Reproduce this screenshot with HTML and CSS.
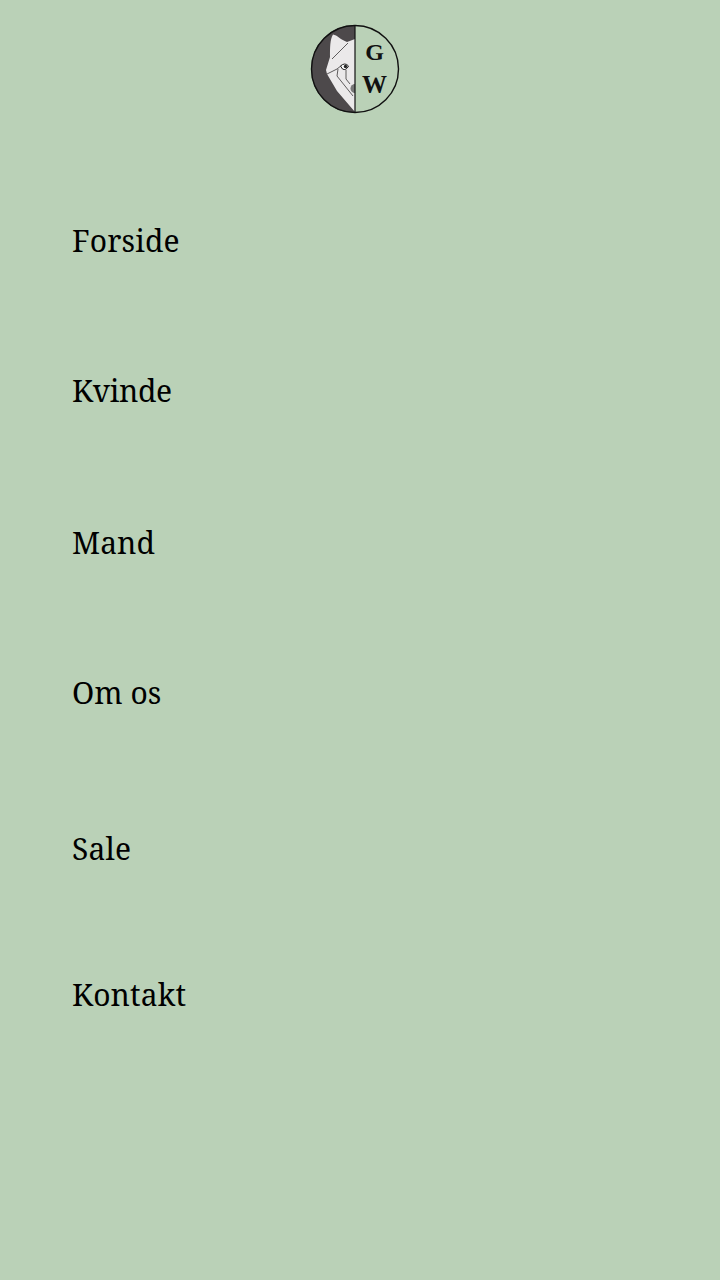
FILE: index.html
```html
<!DOCTYPE html>
<html lang="en">

<head>
    <meta charset="UTF-8">
    <meta name="viewport" content="width=device-width, initial-scale=1.0">
    <title>GW</title>
    <link rel="stylesheet" href="styles.css">
</head>

<body>
    <header class="logo-bar">
        <svg class="logo" width="90" height="90" viewBox="0 0 90 90">
            <path d="M45 1 A44 44 0 0 0 45 89 Z" fill="#4d494b" />
            <path d="M45 15 L37 18 C31 16 27 11 23 10.500 C20 15 20 24 20 33 L16 46 L17 50 L27 67 L45 88 Z" fill="#ebe9ea" />
            <g fill="none" stroke="#3a3739" stroke-width="0.8">
                <path d="M38 19 L22 35" />
                <path d="M17 50 L27 45 L32 41" />
                <path d="M28 45 L27 52 L35 62 L43 72" />
                <path d="M36 46 L36 55 L40 60" />
            </g>
            <path d="M30.500 42 Q35 38 38.500 42 Q36 47 32.500 45 Z" fill="#fff" stroke="#222" stroke-width="1" />
            <circle cx="35.500" cy="42.500" r="1.700" fill="#222" />
            <path d="M45 60 A4.500 4.500 0 0 0 45 69 Z" fill="#777" />
            <circle cx="45" cy="45" r="43.500" fill="none" stroke="#111" stroke-width="1.400" />
            <line x1="45" y1="1" x2="45" y2="89" stroke="#111" stroke-width="1.200" />
            <text class="logo-letter letter-g" x="64.500" y="36">G</text>
            <text class="logo-letter" x="64.500" y="69">W</text>
        </svg>
    </header>

    <nav class="menu">
        <a class="menu-item item-wide" href="#">Forside</a>
        <a class="menu-item item-narrow" href="#">Kvinde</a>
        <a class="menu-item item-mand" href="#">Mand</a>
        <a class="menu-item" href="#">Om os</a>
        <a class="menu-item item-wide item-sale" href="#">Sale</a>
        <a class="menu-item item-wide" href="#">Kontakt</a>
    </nav>
</body>

</html>
```

FILE: styles.css
```css
body {
    margin: 0;
    min-height: 1280px;
    background-color: #bad1b7;
    color: #000;
    font-family: "Noto Serif", "Droid Serif", "DejaVu Serif", serif;
    font-kerning: none;
}

.logo-bar {
    display: flex;
    justify-content: center;
    padding: 24px 10px 0 0;
}

.logo {
    display: block;
}

.logo-letter {
    font-family: "Liberation Serif", serif;
    font-size: 25px;
    font-weight: bold;
    text-anchor: middle;
    fill: #111;
}

.letter-g {
    font-size: 24px;
}

.menu {
    display: flex;
    flex-direction: column;
    padding: 104px 0 0 72px;
}

.menu-item {
    color: #000;
    font-size: 30px;
    line-height: 46px;
    text-decoration: none;
    margin-bottom: 104px;
}

.item-wide {
    letter-spacing: 0.15px;
}

.item-narrow {
    letter-spacing: -0.35px;
}

.item-mand {
    margin-top: 2px;
}

.item-sale {
    margin-top: 6px;
    margin-bottom: 100px;
}
```
